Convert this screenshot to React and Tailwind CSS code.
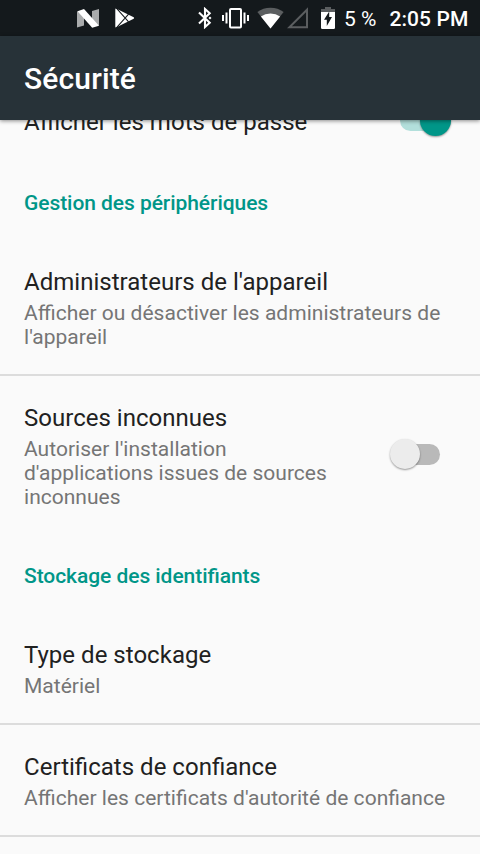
function StatusIcons() {
  return (
    <>
      <svg className="ml-[77px] shrink-0" width="22" height="19" viewBox="0 0 22 19">
        <path d="M0 2.2V18.6L7 16.4V5zM22 0L15 2V13L22 16.8z" fill="#a9abac" />
        <path d="M0.5 2.2L7 0L22 16.8L15.2 18.8z" fill="#fff" />
      </svg>
      <svg className="ml-4 shrink-0" width="20" height="20" viewBox="0 0 20 20">
        <path d="M0.3 1.5Q0.3 0 1.5 0.7L18.7 9.2Q19.6 10 18.7 10.8L1.5 19.3Q0.3 20 0.3 18.5z" fill="#fff" />
        <path d="M1.2 0L13.6 13.8M1.2 20L13.6 6.2" stroke="#14191c" strokeWidth="1.1" fill="none" />
      </svg>
      <svg className="ml-[63px] shrink-0" width="14" height="22" viewBox="0 0 14 22">
        <path d="M1 5.6L11.7 15.8L7 20V2L11.7 6.2L1 16.4" fill="none" stroke="#fff" strokeWidth="2.1" />
        <path d="M12 9.5L13.5 11L12 12.5L10.5 11z" fill="#fff" />
      </svg>
      <svg className="ml-[10px] shrink-0" width="27" height="22" viewBox="0 0 27 22">
        <rect x="8" y="2" width="11" height="18.4" rx="1" fill="none" stroke="#fff" strokeWidth="2" />
        <path d="M1 8V14M4.5 5.5V16.5M22.5 5.5V16.5M26 8V14" stroke="#fff" strokeWidth="2" />
      </svg>
      <svg className="ml-2 shrink-0" width="27" height="22" viewBox="0 0 27 22">
        <path d="M13.5 21.5L0.4 5.1Q6 0.7 13.5 0.7Q21 0.7 26.6 5.1z" fill="#5b5e60" />
        <path d="M13.5 21.5L3.9 9.4Q8 6.5 13.5 6.5Q19 6.5 23.1 9.4z" fill="#fff" />
      </svg>
      <svg className="ml-[3px] shrink-0" width="22" height="22" viewBox="0 0 22 22">
        <path d="M2.4 20.3H20V2.7z" fill="none" stroke="#5b5e60" strokeWidth="2" />
      </svg>
      <svg className="mb-px ml-3 shrink-0" width="14" height="22" viewBox="0 0 14 22">
        <path d="M4 0H10V2H14V5H0V2H4z" fill="#5b5e60" />
        <path d="M0 5H14V20.5Q14 22 12.8 22H1.2Q0 22 0 20.5z" fill="#fff" />
        <path d="M8.2 4.5V10H11L5.8 19V12.8H3z" fill="#14191c" />
      </svg>
    </>
  );
}

function Switch({ on = false }) {
  return (
    <div className="relative h-[31px] w-[62px] shrink-0">
      <div
        className={
          on
            ? "absolute left-[11px] top-[5px] h-[21px] w-[40px] rounded-full bg-[#b2dfdb]"
            : "absolute left-[11px] top-[5px] h-[21px] w-[40px] rounded-full bg-[#b9b9b9]"
        }
      />
      <div
        className={
          on
            ? "absolute left-[31px] top-0 size-[31px] rounded-full bg-[#009688] shadow-[0_1px_2px_rgba(0,0,0,0.4)]"
            : "absolute left-[0.5px] top-0 size-[30.5px] rounded-full bg-[#ececec] shadow-[0_1px_2px_rgba(0,0,0,0.4)]"
        }
      />
    </div>
  );
}

function Category({ children }) {
  return (
    <h2 className="pt-[30px] pb-[51px] text-[21px] leading-6 font-medium tracking-[-0.06px] text-[#009688]">
      <span className="block px-6">{children}</span>
    </h2>
  );
}

function Preference({ title, lines, divider = false, children }) {
  return (
    <div className={divider ? "border-b-2 border-[#dcdcdc]" : ""}>
      <div className="flex items-center justify-between pb-[25px] pl-6 pr-[29px]">
        <div className="whitespace-nowrap">
          <div className="text-[24px] leading-8 text-[#212121]">{title}</div>
          {lines && (
            <div className="mt-[3px] text-[21px] leading-6 text-[#757575]">
              {lines.map((line) => (
                <div key={line}>{line}</div>
              ))}
            </div>
          )}
        </div>
        {children && <div className="-mt-[3px]">{children}</div>}
      </div>
    </div>
  );
}

export default function App() {
  return (
    <div className="flex h-[854px] w-[480px] flex-col overflow-hidden bg-[#fafafa] font-['Roboto',sans-serif]">
      <div className="flex h-9 shrink-0 items-center bg-[#14191c] text-[21px] leading-6 text-white">
        <StatusIcons />
        <span className="ml-[9px] whitespace-nowrap pt-px">5 %</span>
        <span className="ml-[13px] whitespace-nowrap pt-px font-medium tracking-[0.1px]">2:05 PM</span>
      </div>
      <header className="z-10 flex h-[84px] shrink-0 items-center bg-[#273238] px-6 pt-[2px] shadow-[0_1px_4px_rgba(0,0,0,0.45)]">
        <h1 className="text-[30px] leading-9 font-medium tracking-[0.15px] text-white">Sécurité</h1>
      </header>
      <main className="min-h-0 grow overflow-hidden tracking-[0.02px] [font-feature-settings:'liga'_1]">
        <div className="-mt-[14px]">
          <div className="flex h-[55px] items-start justify-between pl-6 pr-[29px]">
            <div className="text-[24px] leading-8 text-[#212121]">Afficher les mots de passe</div>
            <div className="-mt-px">
              <Switch on />
            </div>
          </div>
          <Category>Gestion des périphériques</Category>
          <Preference
            divider
            title="Administrateurs de l'appareil"
            lines={["Afficher ou désactiver les administrateurs de", "l'appareil"]}
          />
          <div className="pt-[26px]">
            <Preference
              title="Sources inconnues"
              lines={["Autoriser l'installation", "d'applications issues de sources", "inconnues"]}
            >
              <Switch />
            </Preference>
          </div>
          <Category>Stockage des identifiants</Category>
          <Preference divider title="Type de stockage" lines={["Matériel"]} />
          <div className="pt-[26px]">
            <Preference
              divider
              title="Certificats de confiance"
              lines={["Afficher les certificats d'autorité de confiance"]}
            />
          </div>
        </div>
      </main>
    </div>
  );
}
